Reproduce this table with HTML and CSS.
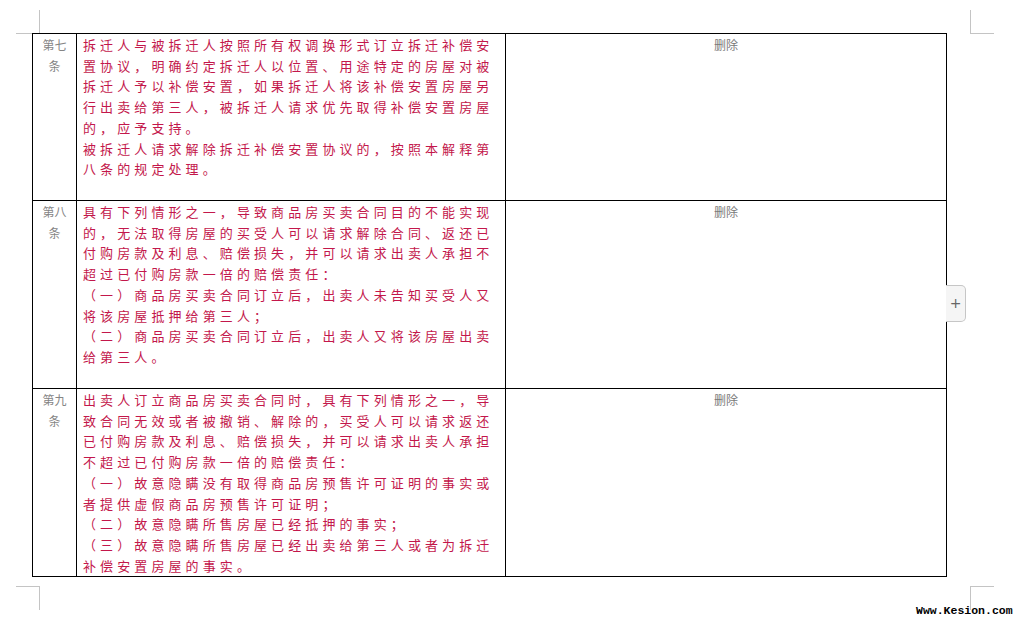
FILE: index.html
```html
<!DOCTYPE html>
<html lang="zh-CN">
<head>
<meta charset="utf-8">
<title>司法解释对照</title>
<link rel="stylesheet" href="styles.css">
</head>
<body>
<div class="page">
  <span class="mark mark-tl"></span>
  <span class="mark mark-tr"></span>
  <span class="mark mark-bl"></span>
  <span class="mark mark-br"></span>

  <div class="sheet">
    <table class="law">
      <colgroup>
        <col class="c-num">
        <col class="c-text">
        <col class="c-note">
      </colgroup>
      <tr class="row row-7">
        <td class="num">第七条</td>
        <td class="text">拆迁人与被拆迁人按照所有权调换形式订立拆迁补偿安置协议，明确约定拆迁人以位置、用途特定的房屋对被拆迁人予以补偿安置，如果拆迁人将该补偿安置房屋另行出卖给第三人，被拆迁人请求优先取得补偿安置房屋的，应予支持。<br>被拆迁人请求解除拆迁补偿安置协议的，按照本解释第八条的规定处理。</td>
        <td class="note">删除</td>
      </tr>
      <tr class="row row-8">
        <td class="num">第八条</td>
        <td class="text">具有下列情形之一，导致商品房买卖合同目的不能实现的，无法取得房屋的买受人可以请求解除合同、返还已付购房款及利息、赔偿损失，并可以请求出卖人承担不超过已付购房款一倍的赔偿责任：<br>（一）商品房买卖合同订立后，出卖人未告知买受人又将该房屋抵押给第三人；<br>（二）商品房买卖合同订立后，出卖人又将该房屋出卖给第三人。</td>
        <td class="note">删除</td>
      </tr>
      <tr class="row row-9">
        <td class="num">第九条</td>
        <td class="text">出卖人订立商品房买卖合同时，具有下列情形之一，导致合同无效或者被撤销、解除的，买受人可以请求返还已付购房款及利息、赔偿损失，并可以请求出卖人承担不超过已付购房款一倍的赔偿责任：<br>（一）故意隐瞒没有取得商品房预售许可证明的事实或者提供虚假商品房预售许可证明；<br>（二）故意隐瞒所售房屋已经抵押的事实；<br>（三）故意隐瞒所售房屋已经出卖给第三人或者为拆迁补偿安置房屋的事实。</td>
        <td class="note">删除</td>
      </tr>
    </table>
    <button class="add-btn" type="button">+</button>
  </div>

  <div class="watermark">Www.Kesion.com</div>
</div>
</body>
</html>
```

FILE: styles.css
```css
* {
  box-sizing: border-box;
}

html, body {
  margin: 0;
  padding: 0;
  background: #ffffff;
}

body {
  font-family: "Noto Sans CJK SC", "Noto Sans", sans-serif;
}

.page {
  position: relative;
  width: 1015px;
  height: 621px;
  padding: 33px 0 0 32px;
  overflow: hidden;
}

/* crop marks of the document page */
.mark {
  position: absolute;
  width: 24px;
  height: 24px;
  border-color: #c4c4c4;
  border-style: solid;
  border-width: 0;
}

.mark-tl {
  left: 16px;
  top: 10px;
  border-right-width: 1px;
  border-bottom-width: 1px;
}

.mark-tr {
  left: 970px;
  top: 10px;
  border-left-width: 1px;
  border-bottom-width: 1px;
}

.mark-bl {
  left: 16px;
  top: 586px;
  border-right-width: 1px;
  border-top-width: 1px;
}

.mark-br {
  left: 970px;
  top: 586px;
  border-left-width: 1px;
  border-top-width: 1px;
}

.sheet {
  position: relative;
  width: 914px;
}

.law {
  border-collapse: collapse;
  table-layout: fixed;
  width: 914px;
}

.c-num {
  width: 44px;
}

.c-text {
  width: 429px;
}

.c-note {
  width: 441px;
}

.law td {
  border: 1px solid #000000;
  vertical-align: top;
  line-height: 20.7px;
}

.row-7 {
  height: 167px;
}

.row-8 {
  height: 188px;
}

.row-9 {
  height: 187px;
}

.num {
  padding: 1px 4px 0 4px;
  font-size: 12px;
  color: #858585;
  text-align: center;
}

.text {
  padding: 1px 8px 0 6px;
  font-size: 13px;
  letter-spacing: 4.1px;
  color: #c3174b;
  text-spacing-trim: space-all;
}

.note {
  padding: 1px 4px 0 4px;
  font-size: 12px;
  color: #7a7a7a;
  text-align: center;
}

.add-btn {
  position: absolute;
  left: 914px;
  top: 252px;
  width: 20px;
  height: 37px;
  padding: 0;
  margin: 0;
  border: 1px solid #c6c6c6;
  border-left: none;
  border-radius: 0 5px 5px 0;
  background: #f5f5f5;
  color: #666666;
  font-family: "DejaVu Sans", sans-serif;
  font-size: 14px;
  line-height: 35px;
  text-align: center;
}

.watermark {
  position: absolute;
  left: 916px;
  top: 604px;
  font-family: "Liberation Mono", monospace;
  font-weight: bold;
  font-size: 11.5px;
  line-height: 14px;
  color: #000000;
  letter-spacing: 0;
}
```
